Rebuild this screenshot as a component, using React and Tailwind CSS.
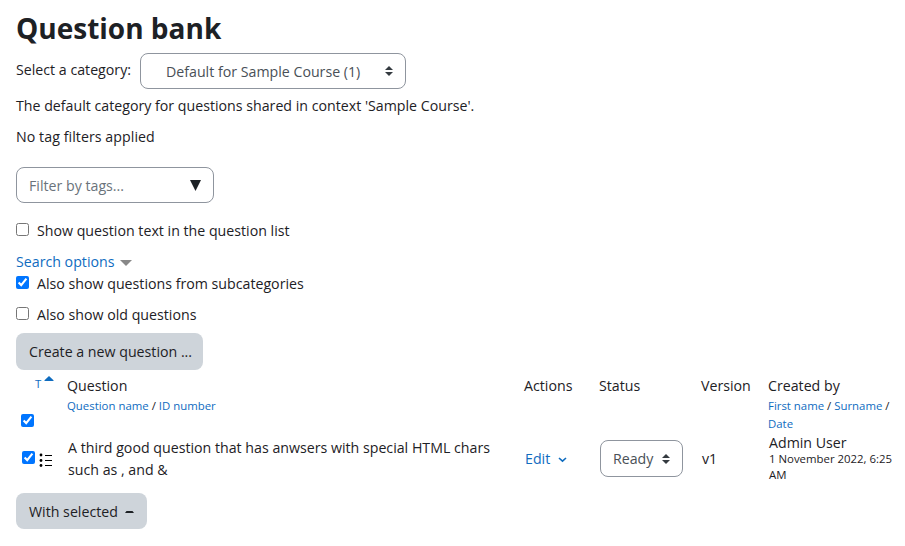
import { useState } from "react"

const SortArrows = () => (
    <svg width="8" height="10" viewBox="0 0 8 10" className="shrink-0">
        <path fill="#343a40" d="M4 0L0 4h8zM4 10L0 6h8z" />
    </svg>
)

const Checkbox = ({ checked = false, className = "" }) => {
    const [value, setValue] = useState(checked)

    return (
        <input
            type="checkbox"
            checked={value}
            onChange={e => setValue(e.target.checked)}
            className={`block size-[13px] shrink-0 ${className}`}
        />
    )
}

const Option = ({ label, checked, className = "" }) => (
    <label className={`flex h-[22px] items-start ${className}`}>
        <Checkbox checked={checked} className="mt-[3px]" />
        <span className="ml-2">{label}</span>
    </label>
)

const ListIcon = () => (
    <svg width="14" height="14" viewBox="0 0 14 14" className="block">
        <g fill="#000">
            <circle cx="2" cy="2" r="1.4" />
            <circle cx="2" cy="7.5" r="1.4" />
            <circle cx="2" cy="12.5" r="1.4" />
            <path d="M6 2h7v1H6zM6 7h7v1H6zM6 12h7v1H6z" />
        </g>
    </svg>
)

const QuestionTable = () => (
    <div className="mt-[5px]">
        <div className="flex h-[62px]">
            <div className="w-[51px] shrink-0">
                <div className="flex h-[45px] pl-[19px] text-[#0f6cbf]">
                    <span className="text-[11.4px] leading-[18px]">T</span>
                    <svg width="10" height="5" viewBox="0 0 10 5" className="mt-[1px] ml-[3px]">
                        <path fill="#0f6cbf" d="M5 0L9.5 4.2V5H.5V4.2z" />
                    </svg>
                </div>
                <Checkbox checked className="-mt-[6px] ml-[5px]" />
            </div>
            <div className="w-[457px] shrink-0">
                <div>Question</div>
                <div className="text-[11.4px] leading-[18px] text-[#0f6cbf]">
                    Question name <span className="text-[#1d2125]">/</span> ID number
                </div>
            </div>
            <div className="w-[75px] shrink-0">Actions</div>
            <div className="w-[102px] shrink-0">Status</div>
            <div className="w-[67px] shrink-0">Version</div>
            <div className="w-[135px] shrink-0">
                <div>Created by</div>
                <div className="text-[11.4px] leading-[18px] text-[#0f6cbf]">
                    First name <span className="text-[#1d2125]">/</span> Surname <span className="text-[#1d2125]">/</span>
                    <br />
                    Date
                </div>
            </div>
        </div>
        <div className="flex h-[44px] items-center">
            <div className="flex w-[52px] shrink-0 pl-[6px]">
                <Checkbox checked />
                <div className="mt-[2px] ml-[4px]"><ListIcon /></div>
            </div>
            <div className="w-[457px] shrink-0">
                A third good question that has anwsers with special HTML chars
                <br />
                such as , and &amp;
            </div>
            <a href="#" className="flex w-[75px] shrink-0 items-center text-[#0f6cbf]">
                Edit
                <svg width="9" height="6" viewBox="0 0 9 6" className="mt-[2px] ml-[8px]">
                    <path d="M1 1l3.5 3.2L8 1" fill="none" stroke="#0f6cbf" strokeWidth="1.6" />
                </svg>
            </a>
            <div className="mb-[1px] w-[102px] shrink-0">
                <button className="flex h-[37px] w-[83px] items-center justify-between rounded-lg border border-[#8f959e] px-[12px] text-[#495057]">
                    <span className="pt-[1px]">Ready</span> <SortArrows />
                </button>
            </div>
            <div className="w-[67px] shrink-0">v1</div>
            <div className="w-[135px] shrink-0 leading-[16px]">
                <div>Admin User</div>
                <div className="text-[11.4px]">
                    1 November 2022, 6:25
                    <br />
                    AM
                </div>
            </div>
        </div>
    </div>
)

const App = () => {
    return (
        <div className="h-[546px] w-[905px] overflow-hidden bg-white pt-[10px] pl-4 font-['Open_Sans','Noto_Sans',sans-serif] text-[14.2px] leading-[22px] text-[#1d2125]">
            <h1 className="h-[43px] text-[28px] leading-[36px] font-bold">Question bank</h1>
            <div className="flex h-9">
                <span className="mt-[6px] w-[124px] shrink-0">Select a category:</span>
                <button className="flex h-9 w-[266px] items-center justify-between rounded-lg border border-[#8f959e] pr-[12px] pl-[25px] text-[#495057]">
                    <span className="pt-[2px]">Default for Sample Course (1)</span> <SortArrows />
                </button>
            </div>
            <p className="mt-[6px]">The default category for questions shared in context 'Sample Course'.</p>
            <p className="mt-[9px] tracking-[0.06px]">No tag filters applied</p>
            <div className="mt-[19px] flex h-9 w-[198px] items-center justify-between rounded-lg border border-[#8f959e] px-[12px]">
                <span className="pt-[2px] text-[#6a737b]">Filter by tags...</span>
                <svg width="11" height="11" viewBox="0 0 11 11">
                    <path fill="#1d2125" d="M0 0h11L5.5 11z" />
                </svg>
            </div>
            <Option label="Show question text in the question list" className="mt-[17px]" />
            <a href="#" className="mt-[9px] flex h-[22px] items-center text-[#0f6cbf]">
                Search options
                <svg width="12" height="6" viewBox="0 0 12 6" className="mt-[2px] ml-[6px]">
                    <path fill="#888" d="M0 0h12L6 6z" />
                </svg>
            </a>
            <Option label="Also show questions from subcategories" checked />
            <Option label="Also show old questions" className="mt-[9px]" />
            <button className="mt-[7px] block h-[37px] w-[187px] rounded-lg bg-[#ced4da] pl-[13px] text-left">
                Create a new question ...
            </button>
            <QuestionTable />
            <button className="mt-[12px] flex h-9 w-[131px] items-center rounded-lg bg-[#ced4da] pl-[13px]">
                <span className="pt-[2px]">With selected</span>
                <svg width="9" height="3" viewBox="0 0 9 3" className="mt-[3px] ml-[7px]">
                    <path fill="#1d2125" d="M1.5 0h6L9 2H0z" />
                </svg>
            </button>
        </div>
    )
}

export default App
